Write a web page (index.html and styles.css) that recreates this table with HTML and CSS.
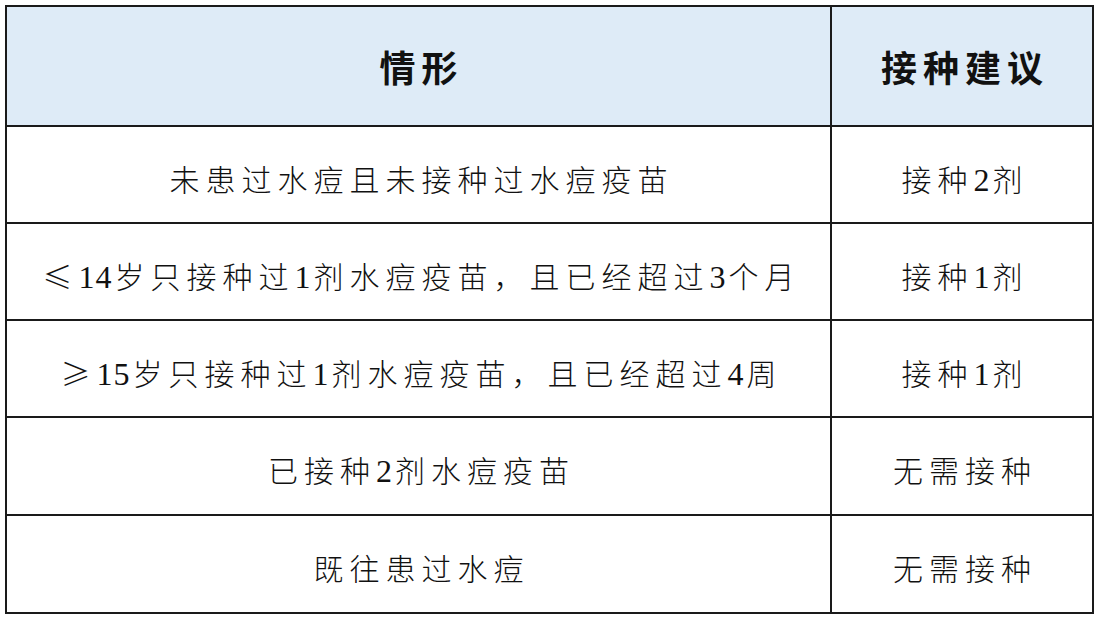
FILE: index.html
```html
<!DOCTYPE html>
<html lang="zh-CN">
<head>
<meta charset="utf-8">
<link rel="stylesheet" href="styles.css">
</head>
<body>
<table class="grid">
  <colgroup><col class="c1"><col class="c2"></colgroup>
  <thead>
    <tr class="head"><th>情形</th><th>接种建议</th></tr>
  </thead>
  <tbody>
    <tr><td>未患过水痘且未接种过水痘疫苗</td><td>接种<span class="num">2</span>剂</td></tr>
    <tr><td><span class="sym">≤</span><span class="num">14</span>岁只接种过<span class="num">1</span>剂水痘疫苗，且已经超过<span class="num">3</span>个月</td><td>接种<span class="num">1</span>剂</td></tr>
    <tr><td><span class="sym">≥</span><span class="num">15</span>岁只接种过<span class="num">1</span>剂水痘疫苗，且已经超过<span class="num">4</span>周</td><td>接种<span class="num">1</span>剂</td></tr>
    <tr class="tall"><td>已接种<span class="num">2</span>剂水痘疫苗</td><td>无需接种</td></tr>
    <tr class="tall"><td>既往患过水痘</td><td>无需接种</td></tr>
  </tbody>
</table>
</body>
</html>
```
FILE: styles.css
```css
html, body {
  margin: 0;
  padding: 0;
  background: #ffffff;
}
body {
  padding: 5px 0 0 5px;
}
.grid {
  border-collapse: collapse;
  width: 1087px;
  table-layout: fixed;
  font-family: "Noto Sans CJK SC", serif;
  color: #111;
}
.c1 { width: 825px; }
.c2 { width: 262px; }
.grid th, .grid td {
  border: 2px solid #1a1a1a;
  text-align: center;
  vertical-align: middle;
  padding: 0 0 0 6px;
}
.head th {
  height: 118px;
  background: #deebf7;
  font-family: "Noto Sans CJK SC", sans-serif;
  font-weight: 700;
  font-size: 36px;
  letter-spacing: 6px;
}
.grid td {
  height: 89px;
  font-size: 30px;
  font-weight: 300;
  letter-spacing: 6px;
  padding-top: 6px;
}
.grid .tall td {
  height: 90px;
}
.num {
  font-family: "Liberation Serif", serif;
  font-weight: 400;
  font-size: 32px;
  letter-spacing: 1px;
  margin-right: 2px;
}
.sym {
  font-family: "Noto Sans CJK SC", sans-serif;
}
```
